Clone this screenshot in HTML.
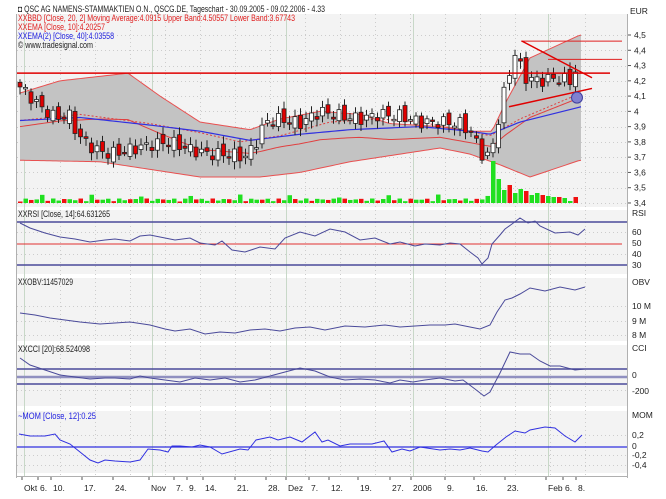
<!DOCTYPE html>
<html><head><meta charset="utf-8"><style>
html,body{margin:0;padding:0;background:#fff;width:666px;height:499px;overflow:hidden}
svg{display:block;font-family:"Liberation Sans",sans-serif}
</style></head><body>
<svg id="s" width="666" height="499" xmlns="http://www.w3.org/2000/svg">
<rect x="0" y="0" width="666" height="499" fill="#fff"/>
<g id="bg"></g>
<g id="g"></g>
<g font-size="9" fill="#222">
<text x="18" y="12" textLength="307" lengthAdjust="spacingAndGlyphs">◘ QSC AG NAMENS-STAMMAKTIEN O.N., QSCG.DE, Tageschart - 30.09.2005 - 09.02.2006 - 4.33</text>
<text x="18" y="21" fill="#e02020" textLength="277" lengthAdjust="spacingAndGlyphs">XXBBD [Close, 20, 2] Moving Average:4.0915 Upper Band:4.50557 Lower Band:3.67743</text>
<text x="18" y="30" fill="#e02020" textLength="87" lengthAdjust="spacingAndGlyphs">XXEMA [Close, 10]:4.20257</text>
<text x="18" y="39" fill="#2020e0" textLength="96" lengthAdjust="spacingAndGlyphs">XXEMA(2) [Close, 40]:4.03558</text>
<text x="18" y="48" textLength="75" lengthAdjust="spacingAndGlyphs">© www.tradesignal.com</text>
<text x="18" y="217" textLength="92" lengthAdjust="spacingAndGlyphs">XXRSI [Close, 14]:64.631265</text>
<text x="18" y="285" textLength="55" lengthAdjust="spacingAndGlyphs">XXOBV:11457029</text>
<text x="18" y="352" textLength="72" lengthAdjust="spacingAndGlyphs">XXCCI [20]:68.524098</text>
<text x="18" y="419" fill="#2020e0" textLength="78" lengthAdjust="spacingAndGlyphs">~MOM [Close, 12]:0.25</text>
</g>
<g font-size="8.5" fill="#222" id="ax"></g>
</svg>
<script>
var NS="http://www.w3.org/2000/svg",g=document.getElementById('g'),bg=document.getElementById('bg'),ax=document.getElementById('ax');
function el(p,t,a,txt){var e=document.createElementNS(NS,t);for(var k in a)e.setAttribute(k,a[k]);if(txt!=null)e.textContent=txt;p.appendChild(e);return e;}
function interp(pts,x){for(var i=0;i<pts.length-1;i++){if(x>=pts[i][0]&&x<=pts[i+1][0]){var t=(x-pts[i][0])/(pts[i+1][0]-pts[i][0]);return pts[i][1]+t*(pts[i+1][1]-pts[i][1]);}}return x<pts[0][0]?pts[0][1]:pts[pts.length-1][1];}
function Y(p){return 35+(4.5-p)*152.7;}
var panels=[[14,207],[210,274],[278,341],[345,406],[411,473]];
panels.forEach(function(p){el(bg,'rect',{x:17,y:p[0],width:610,height:p[1]-p[0],fill:'#f3f3f3'});});
el(bg,'line',{x1:16.5,y1:14,x2:16.5,y2:478,stroke:'#b0b0b0'});
el(bg,'line',{x1:627.5,y1:14,x2:627.5,y2:478,stroke:'#b0b0b0'});
el(bg,'line',{x1:17,y1:476.5,x2:627,y2:476.5,stroke:'#b0b0b0'});
[24,152,286,413,548].forEach(function(x){el(bg,'line',{x1:x+.5,y1:14,x2:x+.5,y2:476,stroke:'#c8d8c8'});});
var dv=[];for(var x=60;x<620;x+=35)dv.push(x);
dv.forEach(function(x){el(bg,'line',{x1:x+.5,y1:14,x2:x+.5,y2:476,stroke:'#ccc','stroke-dasharray':'1,3'});});
function hgrid(ys){ys.forEach(function(y){el(bg,'line',{x1:17,y1:y+.5,x2:627,y2:y+.5,stroke:'#ccc','stroke-dasharray':'1,3'});});}
var py=[];for(var p=3.4;p<=4.51;p+=0.1)py.push(Math.round(Y(p)));hgrid(py);
hgrid([232,254,306,321,335,390,435,455,465]);
var labs=['3,4','3,5','3,6','3,7','3,8','3,9','4','4,1','4,2','4,3','4,4','4,5'];
labs.forEach(function(l,i){var y=Y(3.4+i*0.1);el(ax,'line',{x1:628,y1:y,x2:631,y2:y,stroke:'#555'});el(ax,'text',{x:634,y:y+3},l);});
el(ax,'text',{x:630,y:14},'EUR');
[['RSI',216],['60',235],['50',246],['40',257],['30',268],['OBV',285],['10 M',309],['9 M',324],['8 M',338],['CCI',351],['0',378],['-200',394],['MOM',418],['0,2',438],['0',449],['-0,2',458],['-0,4',468]].forEach(function(a){el(ax,'text',{x:632,y:a[1]},a[0]);});
[['Okt',24],['6.',40],['10.',53],['17.',84],['24.',115],['Nov',151],['7.',176],['9.',189],['14.',205],['21.',237],['28.',268],['Dez',288],['7.',311],['12.',331],['19.',360],['27.',392],['2006',413],['9.',447],['16.',476],['23.',507],['Feb',548],['6.',565],['8.',578]].forEach(function(a){el(ax,'text',{x:a[1],y:491},a[0]);el(ax,'line',{x1:a[1]-2,y1:477,x2:a[1]-2,y2:480,stroke:'#555'});});
var closeP=[[20,4.16],[30,4.1],[40,4.03],[55,3.96],[70,3.97],[78,3.84],[95,3.75],[110,3.72],[130,3.75],[150,3.78],[170,3.8],[190,3.75],[210,3.72],[230,3.72],[245,3.7],[255,3.78],[265,3.93],[280,3.95],[300,3.92],[320,4.0],[340,3.97],[360,3.95],[380,3.98],[400,3.97],[420,3.93],[440,3.93],[460,3.92],[472,3.86],[482,3.72],[490,3.7],[497,3.9],[505,4.15],[515,4.38],[525,4.22],[540,4.2],[555,4.22],[570,4.2],[581,4.33]];
var up=[[20,4.12],[60,4.2],[128,4.25],[160,4.1],[200,3.93],[250,3.88],[280,3.95],[320,4.0],[360,3.98],[390,3.92],[440,3.9],[470,3.87],[492,3.87],[505,4.05],[530,4.35],[580,4.5]];
var lo=[[20,3.68],[100,3.67],[150,3.62],[200,3.57],[260,3.57],[300,3.6],[350,3.67],[400,3.72],[440,3.76],[470,3.72],[500,3.65],[530,3.57],[580,3.68]];
var pts=[],i,x;
for(x=20;x<=581;x+=3)pts.push(x+','+Y(interp(up,x)));
for(x=581;x>=20;x-=3)pts.push(x+','+Y(interp(lo,x)));
el(g,'polygon',{points:pts.join(' '),fill:'#c3c3c3'});
function line(arr,fn,attrs){var s=[];for(var x=20;x<=581;x+=3)s.push(x+','+fn(x));attrs.points=s.join(' ');attrs.fill='none';el(g,'polyline',attrs);}
line(null,function(x){return Y(interp(up,x));},{stroke:'#e85050','stroke-width':1});
line(null,function(x){return Y(interp(lo,x));},{stroke:'#e85050','stroke-width':1});
line(null,function(x){return Y((interp(up,x)+interp(lo,x))/2);},{stroke:'#e04040','stroke-width':1});
var ema=[[20,3.94],[80,3.98],[150,3.92],[200,3.86],[240,3.8],[280,3.84],[330,3.93],[380,3.95],[420,3.93],[470,3.87],[490,3.84],[520,3.95],[581,4.12]];
line(null,function(x){return Y(interp(ema,x));},{stroke:'#e04040','stroke-dasharray':'2,2'});
var ema2=[[20,3.94],[80,3.96],[150,3.91],[200,3.87],[250,3.81],[300,3.85],[350,3.88],[420,3.9],[470,3.87],[490,3.85],[520,3.93],[581,4.03]];
line(null,function(x){return Y(interp(ema2,x));},{stroke:'#3030e0','stroke-width':1.2});
var prev=interp(closeP,20);
var big={86:42,87:24,88:13,89:18,90:10,91:14,92:12,93:8,94:10,95:8,96:7,97:6,98:6,99:5,100:2,101:6};
for(i=0;i<102;i++){x=20+i*5.5;var c=interp(closeP,x)+0.04*Math.sin(i*2.3);var o=prev+0.03*Math.cos(i*1.7);var hi=Math.max(o,c)+0.02+0.03*Math.abs(Math.sin(i*3.1));var lw=Math.min(o,c)-0.02-0.03*Math.abs(Math.cos(i*2.9));
el(g,'line',{x1:x,y1:Y(hi),x2:x,y2:Y(lw),stroke:'#222'});
var t=Y(Math.max(o,c)),b=Y(Math.min(o,c));if(b-t<1.5)b=t+1.5;
el(g,'rect',{x:x-2,y:t,width:4,height:b-t,fill:c>=o?'#fff':'#e00000',stroke:'#222','stroke-width':0.8});
prev=c;
var vh=1.5+Math.abs(Math.sin(i*1.3))*3;if(i%9==4)vh+=4;if(big[i])vh=big[i];
var col=(Math.sin(i*2.1)>0)?'#20e020':'#f01010';if(i==86)col='#20e020';
el(g,'rect',{x:x-2,y:203-vh,width:4.5,height:vh,fill:col});}
el(g,'line',{x1:17,y1:Y(4.25),x2:610,y2:Y(4.25),stroke:'#e00000','stroke-width':1.5});
el(g,'line',{x1:521,y1:Y(4.46),x2:622,y2:Y(4.46),stroke:'#e02020'});
el(g,'line',{x1:548,y1:Y(4.34),x2:622,y2:Y(4.34),stroke:'#e02020'});
el(g,'line',{x1:522,y1:Y(4.46),x2:592,y2:Y(4.22),stroke:'#e00000','stroke-width':1.5});
el(g,'line',{x1:509,y1:Y(4.03),x2:592,y2:Y(4.15),stroke:'#e00000','stroke-width':1.5});
el(g,'circle',{cx:577,cy:Y(4.09),r:5.5,fill:'#8080d0',stroke:'#4040a0'});
function sub(p,col){var s=p.map(function(a){return a.join(',');}).join(' ');el(g,'polyline',{points:s,fill:'none',stroke:col||'#4a4a9a','stroke-width':1});}
[222,265].forEach(function(y){el(g,'line',{x1:17,y1:y,x2:627,y2:y,stroke:'#4a4a9a','stroke-width':1.5});});
el(g,'line',{x1:17,y1:244,x2:622,y2:244,stroke:'#e03030'});
sub([[20,223],[30,228],[45,233],[60,237],[75,239],[90,242],[105,240],[115,239],[130,241],[140,236],[150,235],[165,238],[175,240],[190,238],[200,243],[215,245],[222,241],[232,250],[245,252],[260,247],[275,249],[285,238],[300,232],[315,236],[330,229],[345,232],[360,240],[375,238],[390,244],[400,242],[415,246],[425,244],[440,245],[450,243],[460,244],[470,252],[478,258],[482,264],[488,258],[492,244],[500,235],[505,229],[512,224],[520,218],[528,223],[535,221],[540,226],[555,233],[570,232],[578,235],[585,229]]);
sub([[20,313],[35,315],[50,318],[65,320],[80,322],[100,324],[115,323],[130,322],[150,325],[165,329],[175,331],[190,329],[205,334],[220,332],[235,333],[250,330],[265,329],[280,331],[295,328],[310,327],[325,330],[345,326],[365,327],[385,325],[400,327],[415,326],[430,325],[445,325],[455,324],[470,327],[480,329],[490,325],[497,312],[505,300],[512,298],[520,294],[530,288],[545,291],[560,287],[575,290],[585,287]]);
[369,377,384].forEach(function(y,k){el(g,'line',{x1:17,y1:y,x2:627,y2:y,stroke:k==1?'#9090c0':'#4a4a9a','stroke-width':k==1?2.5:1.5});});
sub([[20,358],[30,365],[45,370],[60,375],[75,377],[90,379],[105,378],[115,378],[130,379],[140,376],[150,378],[165,380],[180,382],[195,378],[210,380],[225,378],[240,382],[255,380],[270,376],[285,372],[300,368],[315,371],[330,377],[345,380],[360,379],[375,380],[390,383],[400,380],[413,382],[425,380],[440,378],[455,381],[463,380],[475,389],[484,396],[490,392],[500,373],[510,352],[520,354],[530,354],[540,361],[550,366],[560,366],[575,370],[585,369]]);
el(g,'line',{x1:17,y1:447,x2:627,y2:447,stroke:'#3030e0','stroke-width':1.2});
sub([[19,434],[30,436],[45,436],[55,434],[60,440],[70,444],[80,452],[90,460],[98,463],[105,460],[115,461],[130,462],[140,460],[148,449],[160,450],[168,452],[172,446],[180,446],[192,447],[200,445],[210,447],[222,454],[240,449],[248,450],[256,440],[270,437],[278,440],[290,437],[302,442],[315,432],[322,442],[328,440],[340,446],[350,444],[372,444],[384,441],[392,452],[402,449],[410,451],[420,447],[440,450],[450,449],[460,450],[470,448],[482,451],[488,452],[496,445],[506,437],[515,431],[525,433],[530,430],[545,427],[555,428],[565,436],[575,442],[582,435]],'#3030e0');
</script>
</body></html>
